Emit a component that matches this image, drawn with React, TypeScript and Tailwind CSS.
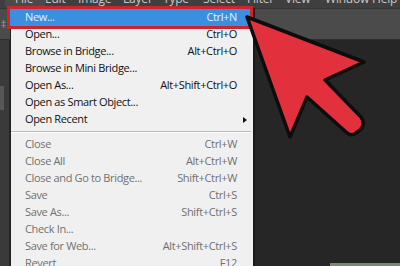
import React from "react";

type Item = {
  label?: string;
  sc?: string;
  hl?: boolean;
  dis?: boolean;
  sub?: boolean;
  sep?: boolean;
};

const items: Item[] = [
  { label: "New...", sc: "Ctrl+N", hl: true },
  { label: "Open...", sc: "Ctrl+O" },
  { label: "Browse in Bridge...", sc: "Alt+Ctrl+O" },
  { label: "Browse in Mini Bridge..." },
  { label: "Open As...", sc: "Alt+Shift+Ctrl+O" },
  { label: "Open as Smart Object..." },
  { label: "Open Recent", sub: true },
  { sep: true },
  { label: "Close", sc: "Ctrl+W", dis: true },
  { label: "Close All", sc: "Alt+Ctrl+W", dis: true },
  { label: "Close and Go to Bridge...", sc: "Shift+Ctrl+W", dis: true },
  { label: "Save", sc: "Ctrl+S", dis: true },
  { label: "Save As...", sc: "Shift+Ctrl+S", dis: true },
  { label: "Check In...", dis: true },
  { label: "Save for Web...", sc: "Alt+Shift+Ctrl+S", dis: true },
  { label: "Revert", sc: "F12", dis: true },
];

// widths so each label starts where the reference has it
const topMenu = [
  { t: "File", c: "w-[40px] -ml-[10px] pl-[10px] bg-[#4a4a4a]" },
  { t: "Edit", c: "w-[33px]" },
  { t: "Image", c: "w-[45px]" },
  { t: "Layer", c: "w-[40px]" },
  { t: "Type", c: "w-[40px]" },
  { t: "Select", c: "w-[44px]" },
  { t: "Filter", c: "w-[38px]" },
  { t: "View", c: "w-[40px]" },
  { t: "Window", c: "w-[47px]" },
  { t: "Help", c: "w-[30px]" },
];

function MenuRow({ item }: { item: Item }) {
  if (item.sep) {
    return (
      <div className="h-[8px] flex flex-col justify-center pr-[2px]">
        <div className="border-t border-[#bcbcbc]" />
        <div className="border-t border-white" />
      </div>
    );
  }
  const color = item.hl
    ? "bg-[#3b8fe0] text-[#e6f1ff] -ml-[1px] mr-[3px] pl-[15px] pr-[13px] outline-3 outline-[#cf2330]"
    : item.dis
    ? "text-[#707070] pl-[14px] pr-[16px]"
    : "text-[#111] pl-[14px] pr-[16px]";
  return (
    <div className={`h-[17px] flex items-center ${color}`}>
      <span className="flex-1 whitespace-nowrap">{item.label}</span>
      {item.sc && <span className="whitespace-nowrap">{item.sc}</span>}
      {item.sub && (
        <span className="-mr-[10px] w-0 h-0 border-y-[3px] border-y-transparent border-l-[4px] border-l-[#111]" />
      )}
    </div>
  );
}

export default function App() {
  return (
    <div
      className="relative w-[400px] h-[266px] overflow-hidden bg-[#262626] flex flex-col"
      style={{ fontFamily: '"Open Sans", "Noto Sans", sans-serif' }}
    >
      {/* top menu bar, cut off by the crop */}
      <div className="h-[8px] overflow-hidden bg-[#3f3f3f] shrink-0">
        <div className="-mt-[9px] pl-[15px] flex text-[12px] leading-[16px] text-[#c9c9c9] tracking-[-0.2px]">
          {topMenu.map((m) => (
            <span key={m.t} className={`shrink-0 whitespace-nowrap ${m.c}`}>
              {m.t}
            </span>
          ))}
        </div>
      </div>

      {/* options bar */}
      <div className="h-[32px] bg-[#4b4b4b] border-t border-[#353535] border-b border-b-[#2e2e2e] shrink-0 flex items-center">
        <span className="ml-[1px] text-[10px] text-[#9a9a9a]">‡</span>
      </div>

      {/* workspace */}
      <div className="flex-1 flex">
        <div className="w-[9px] bg-[#3a3a3a] flex flex-col">
          <div className="mt-[46px] w-[4px] h-[24px] bg-[#575757]" />
        </div>
        <div className="flex-1 flex flex-col">
          <div className="flex-1" />
          <div className="ml-auto w-[70px] h-[3px] bg-[#7b8a6e]" />
        </div>
      </div>

      {/* File dropdown */}
      <div className="absolute left-[10px] top-[8px] w-[243px] bottom-0 bg-[#f0f0f0] border-l border-[#222] pt-[1px] text-[11px] tracking-[-0.35px] shadow-[2px_0_0_#1a1a1a]">
        {items.map((it, i) => (
          <MenuRow key={i} item={it} />
        ))}
      </div>

      {/* red pointer arrow */}
      <svg
        className="absolute inset-0 pointer-events-none"
        width={400}
        height={266}
        viewBox="0 0 400 266"
      >
        <path
          d="M247 17 L364 62 L325 80 L361 117 Q366 124 360 130 L356 133 Q351 137 346 132 L307 97 L290 137 Z"
          fill="#e2303d"
          stroke="#0d0d0d"
          strokeWidth={3.5}
          strokeLinejoin="round"
        />
      </svg>
    </div>
  );
}
